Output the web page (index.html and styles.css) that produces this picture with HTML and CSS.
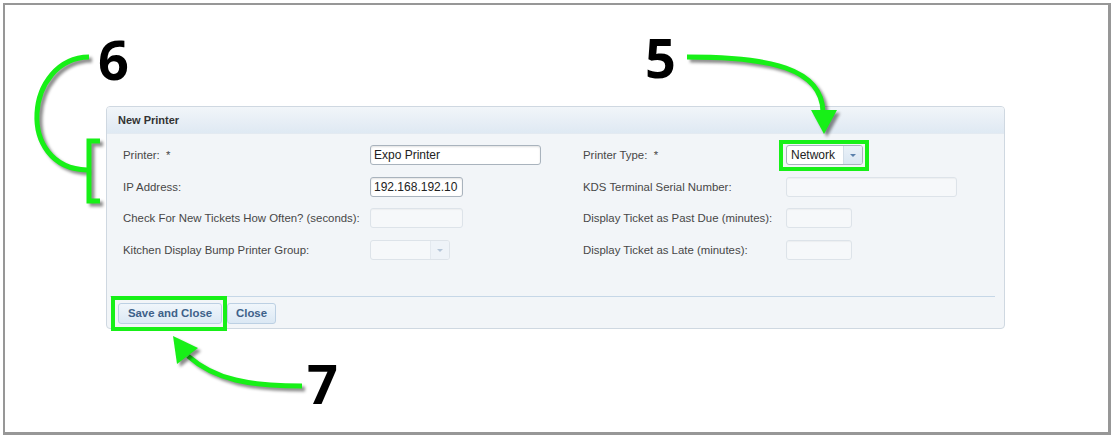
FILE: index.html
```html
<!DOCTYPE html>
<html>
<head>
<meta charset="utf-8">
<link rel="stylesheet" href="styles.css">
</head>
<body>
<div class="frame">
  <div class="dialog">
    <div class="dlg-head">New Printer</div>
    <div class="dlg-body">
      <div class="form">
        <div class="lbl">Printer:&nbsp; *</div>
        <div class="fld"><div class="inp w170">Expo Printer</div></div>
        <div class="lbl">Printer Type:&nbsp; *</div>
        <div class="fld"><div class="combo w76"><span class="cval">Network</span><span class="carr"><i class="tri"></i></span></div></div>

        <div class="lbl">IP Address:</div>
        <div class="fld"><div class="inp w92">192.168.192.10</div></div>
        <div class="lbl">KDS Terminal Serial Number:</div>
        <div class="fld"><div class="inp dis w170"></div></div>

        <div class="lbl">Check For New Tickets How Often? (seconds):</div>
        <div class="fld"><div class="inp dis w92"></div></div>
        <div class="lbl">Display Ticket as Past Due (minutes):</div>
        <div class="fld"><div class="inp dis w65"></div></div>

        <div class="lbl">Kitchen Display Bump Printer Group:</div>
        <div class="fld"><div class="combo dis w79"><span class="cval"></span><span class="carr"><i class="tri"></i></span></div></div>
        <div class="lbl">Display Ticket as Late (minutes):</div>
        <div class="fld"><div class="inp dis w65"></div></div>
      </div>
    </div>
    <div class="dlg-foot">
      <button class="btn save">Save and Close</button>
      <button class="btn close">Close</button>
    </div>
  </div>
</div>

<div class="num n6">6</div>
<div class="num n5">5</div>
<div class="num n7">7</div>
<div class="hl hl-net"></div>
<div class="hl hl-save"></div>

<svg class="annot" width="1112" height="436" viewBox="0 0 1112 436">
  <g class="shadowed" fill="none" stroke="#17f017" stroke-width="5">
    <path d="M89,57 C25,58 15,168 87,170"/>
    <path d="M100,141 H89 V201 H100" stroke-linecap="butt"/>
    <path d="M687,57 C770,57 822,68 823,112"/>
    <path d="M302,386 C250,386 215,380 188,356"/>
  </g>
  <g class="shadowed" fill="#17f017">
    <polygon points="811,110 837,110 824,134"/>
    <polygon points="173,336 177,364 198,348"/>
  </g>
</svg>
</body>
</html>
```

FILE: styles.css
```css
html, body {
  margin: 0;
  padding: 0;
  background: #ffffff;
}
body {
  width: 1112px;
  height: 436px;
  overflow: hidden;
  position: relative;
  font-family: "Liberation Sans", Arial, sans-serif;
}
.frame {
  box-sizing: border-box;
  margin: 3px 0 0 3px;
  width: 1108px;
  height: 432px;
  border-style: solid;
  border-color: #979797;
  border-width: 2px 3px 3px 2px;
  padding: 101px 0 0 101px;
  background: #fff;
}
.dialog {
  box-sizing: border-box;
  width: 899px;
  height: 223px;
  border: 1px solid #cfd8e1;
  border-radius: 4px;
  background: #f2f5f8;
  display: flex;
  flex-direction: column;
  overflow: hidden;
}
.dlg-head {
  height: 26px;
  line-height: 26px;
  padding-left: 11px;
  font-size: 11px;
  font-weight: bold;
  color: #333;
  background: linear-gradient(#f1f5f9, #dfe9f3);
  border-bottom: 1px solid #e3eaf1;
}
.dlg-body {
  flex: 1;
  padding: 11px 0 0 16px;
}
.form {
  display: grid;
  grid-template-columns: 247px 213px 203px 1fr;
  grid-auto-rows: 20px;
  row-gap: 11.7px;
}
.lbl {
  font-size: 11.4px;
  color: #474747;
  line-height: 20px;
  white-space: nowrap;
}
.fld {
  display: flex;
  align-items: center;
}
.inp {
  box-sizing: border-box;
  height: 20px;
  border: 1px solid #a9b3bd;
  border-radius: 3px;
  background: #fff;
  box-shadow: inset 0 1px 2px rgba(0,0,0,0.12);
  font-size: 12px;
  color: #222;
  line-height: 18px;
  padding-left: 3px;
  white-space: nowrap;
  overflow: hidden;
}
.inp.dis {
  border-color: #dde3e9;
  background: #f6f8fa;
  box-shadow: inset 0 1px 1px rgba(0,0,0,0.04);
}
.w170 { width: 171px; }
.w92 { width: 93px; }
.w65 { width: 66px; }
.w76 { width: 77px; }
.w79 { width: 80px; }
.combo {
  box-sizing: border-box;
  height: 20px;
  display: flex;
  border: 1px solid #a9b3bd;
  border-radius: 3px;
  background: #fff;
  overflow: hidden;
}
.cval {
  flex: 1;
  font-size: 12px;
  color: #222;
  line-height: 18px;
  padding-left: 4px;
}
.carr {
  width: 18px;
  border-left: 1px solid #d2dde8;
  background: linear-gradient(#eaf1f8, #dae6f2);
  display: flex;
  align-items: center;
  justify-content: center;
}
.tri {
  width: 0;
  height: 0;
  border-left: 3px solid transparent;
  border-right: 3px solid transparent;
  border-top: 3px solid #5a80ab;
}
.combo.dis {
  border-color: #dde3e9;
  background: #f6f8fa;
}
.combo.dis .carr {
  border-left-color: #e3e9ef;
  background: #eef3f8;
}
.combo.dis .tri {
  border-top-color: #b5c6d8;
}
.dlg-foot {
  margin: 0 9px 0 3px;
  border-top: 1px solid #c6d7e7;
  padding: 6px 0 0 8px;
  height: 25px;
  display: flex;
  align-items: flex-start;
  gap: 5px;
}
.btn {
  box-sizing: border-box;
  height: 21px;
  border: 1px solid #bcd0e3;
  border-radius: 3px;
  background: linear-gradient(#f0f6fb, #dbe8f4);
  font-family: "Liberation Sans", Arial, sans-serif;
  font-size: 11.4px;
  font-weight: bold;
  color: #3d6189;
  padding: 0;
  line-height: 19px;
}
.btn.save { width: 104px; }
.btn.close { width: 49px; }

.num {
  position: absolute;
  font-family: "Open Sans", "Liberation Sans", sans-serif;
  font-weight: bold;
  font-size: 54px;
  line-height: 1;
  color: #000;
}
.n6 { left: 98px; top: 32px; }
.n5 { left: 645px; top: 30px; }
.n7 { left: 307px; top: 356px; }

.hl {
  position: absolute;
  box-sizing: border-box;
  border: 4px solid #17f017;
}
.hl-net { left: 779px; top: 140px; width: 90px; height: 31px; }
.hl-save { left: 111px; top: 296px; width: 116px; height: 35px; }

.annot {
  position: absolute;
  left: 0;
  top: 0;
  pointer-events: none;
}
.shadowed {
  filter: drop-shadow(3px 3px 1.5px rgba(0,0,0,0.45));
}
```
